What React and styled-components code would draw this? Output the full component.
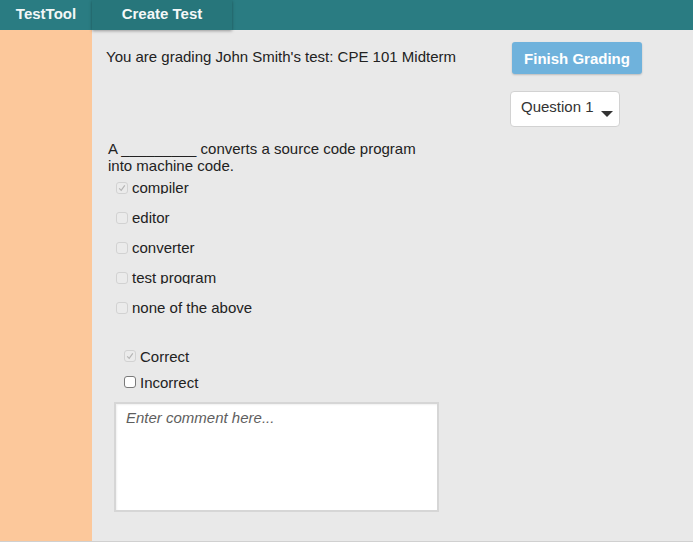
import React from "react";
import styled, { createGlobalStyle } from "styled-components";

const GlobalStyle = createGlobalStyle`
  html, body {
    margin: 0;
    padding: 0;
    background: #ffffff;
  }
  body {
    font-family: "Liberation Sans", Arial, Helvetica, sans-serif;
    color: #222;
  }
`;

const Page = styled.div`
  width: 693px;
  height: 541px;
  display: flex;
  flex-direction: column;
  border-bottom: 1px solid #d0d0d0;
`;

const Header = styled.header`
  height: 30px;
  flex-shrink: 0;
  display: flex;
  background: #2a7c82;
  position: relative;
  z-index: 1;
`;

const Brand = styled.div`
  width: 92px;
  display: flex;
  align-items: center;
  justify-content: center;
  padding-bottom: 3px;
  color: #f2f7f7;
  font-size: 15px;
  font-weight: bold;
`;

const NavButton = styled.button`
  width: 140px;
  border: none;
  padding: 0 0 3px;
  background: #27767b;
  color: #f4f8f8;
  font-family: inherit;
  font-size: 15px;
  font-weight: bold;
  box-shadow: 0 1px 3px rgba(0, 0, 0, 0.35);
`;

const Body = styled.div`
  flex: 1;
  display: flex;
`;

const Sidebar = styled.aside`
  width: 92px;
  background: #fcc89b;
`;

const Main = styled.main`
  flex: 1;
  background: #e9e9e9;
  padding: 12px 0 0 14px;
  display: flex;
  flex-direction: column;
  align-items: flex-start;
`;

const TopRow = styled.div`
  width: 100%;
  display: flex;
  align-items: flex-start;
`;

const Title = styled.div`
  flex: 1;
  margin-top: 6px;
  font-size: 15px;
  line-height: 17px;
`;

const Actions = styled.div`
  display: flex;
  flex-direction: column;
  align-items: flex-start;
  margin-right: 51px;
`;

const FinishButton = styled.button`
  width: 130px;
  height: 32px;
  border: none;
  border-radius: 3px;
  background: #6fb2dc;
  color: #fff;
  font-family: inherit;
  font-size: 15px;
  font-weight: bold;
  box-shadow: 0 1px 2px rgba(0, 0, 0, 0.2);
`;

const Select = styled.div`
  box-sizing: border-box;
  margin: 17px 0 0 -2px;
  width: 110px;
  height: 36px;
  padding: 6px 0 0 10px;
  background: #fff;
  border: 1px solid #d2d2d2;
  border-radius: 4px;
  display: flex;
  align-items: flex-start;
  font-size: 15px;
  line-height: 17px;
  color: #333;
`;

const Caret = styled.span`
  margin: 13px 0 0 7px;
  width: 0;
  height: 0;
  border-top: 6px solid #333;
  border-left: 6px solid transparent;
  border-right: 6px solid transparent;
`;

const Question = styled.p`
  margin: 13px 0 0 2px;
  width: 320px;
  font-size: 15px;
  line-height: 17px;
`;

const OptionList = styled.div`
  margin: 6px 0 0 10px;
  display: flex;
  flex-direction: column;
  gap: 16px;
`;

/* the labels are clipped just under the baseline, as in the original page */
const OptionLabel = styled.label`
  height: 14px;
  overflow: hidden;
  display: flex;
  align-items: flex-start;
  gap: 4px;
  font-size: 15px;
  line-height: 16px;
  color: #222;
`;

const Box = styled.span`
  box-sizing: border-box;
  width: 12px;
  height: 12px;
  flex-shrink: 0;
  margin-top: ${(p) => p.$top}px;
  border-radius: 3px;
  border: 1px solid ${(p) => (p.$disabled ? "#d2d2d2" : "#7a7a7a")};
  background: ${(p) => (p.$disabled ? "#ebebeb" : "#ffffff")};
  display: flex;
  align-items: center;
  justify-content: center;
`;

const GradeList = styled.div`
  margin: 35px 0 0 18px;
  display: flex;
  flex-direction: column;
  gap: 10px;
`;

const GradeLabel = styled.label`
  display: flex;
  align-items: flex-start;
  gap: 4px;
  font-size: 15px;
  line-height: 16px;
  color: #222;
`;

const Comment = styled.textarea`
  box-sizing: border-box;
  margin: 11px 0 0 8px;
  width: 325px;
  height: 110px;
  padding: 5px 10px;
  border: 2px solid #d6d6d6;
  border-radius: 0;
  background: #fff;
  resize: none;
  font-family: inherit;
  font-size: 15px;
  line-height: 18px;
  box-shadow: inset 1px 1px 2px rgba(0, 0, 0, 0.06);
  &::placeholder {
    color: #5e5e5e;
    font-style: italic;
  }
`;

const Check = () => (
  <svg width="8" height="8" viewBox="0 0 8 8">
    <path d="M1.2 4.3 L3.2 6.3 L6.8 1.4" fill="none" stroke="#b5b5b5" strokeWidth="1.2" />
  </svg>
);

const Checkbox = ({ checked, disabled, top = 2 }) => (
  <Box $disabled={disabled} $top={top}>
    {checked && <Check />}
  </Box>
);

const options = [
  { text: "compiler", checked: true },
  { text: "editor" },
  { text: "converter" },
  { text: "test program" },
  { text: "none of the above" },
];

export default function App() {
  return (
    <>
      <GlobalStyle />
      <Page>
        <Header>
          <Brand>TestTool</Brand>
          <NavButton>Create Test</NavButton>
        </Header>
        <Body>
          <Sidebar />
          <Main>
            <TopRow>
              <Title>You are grading John Smith's test: CPE 101 Midterm</Title>
              <Actions>
                <FinishButton>Finish Grading</FinishButton>
                <Select>
                  Question 1
                  <Caret />
                </Select>
              </Actions>
            </TopRow>
            <Question>A _________ converts a source code program into machine code.</Question>
            <OptionList>
              {options.map((o) => (
                <OptionLabel key={o.text}>
                  <Checkbox checked={o.checked} disabled top={2} />
                  {o.text}
                </OptionLabel>
              ))}
            </OptionList>
            <GradeList>
              <GradeLabel>
                <Checkbox checked disabled top={1} />
                Correct
              </GradeLabel>
              <GradeLabel>
                <Checkbox top={1} />
                Incorrect
              </GradeLabel>
            </GradeList>
            <Comment placeholder="Enter comment here..." />
          </Main>
        </Body>
      </Page>
    </>
  );
}
